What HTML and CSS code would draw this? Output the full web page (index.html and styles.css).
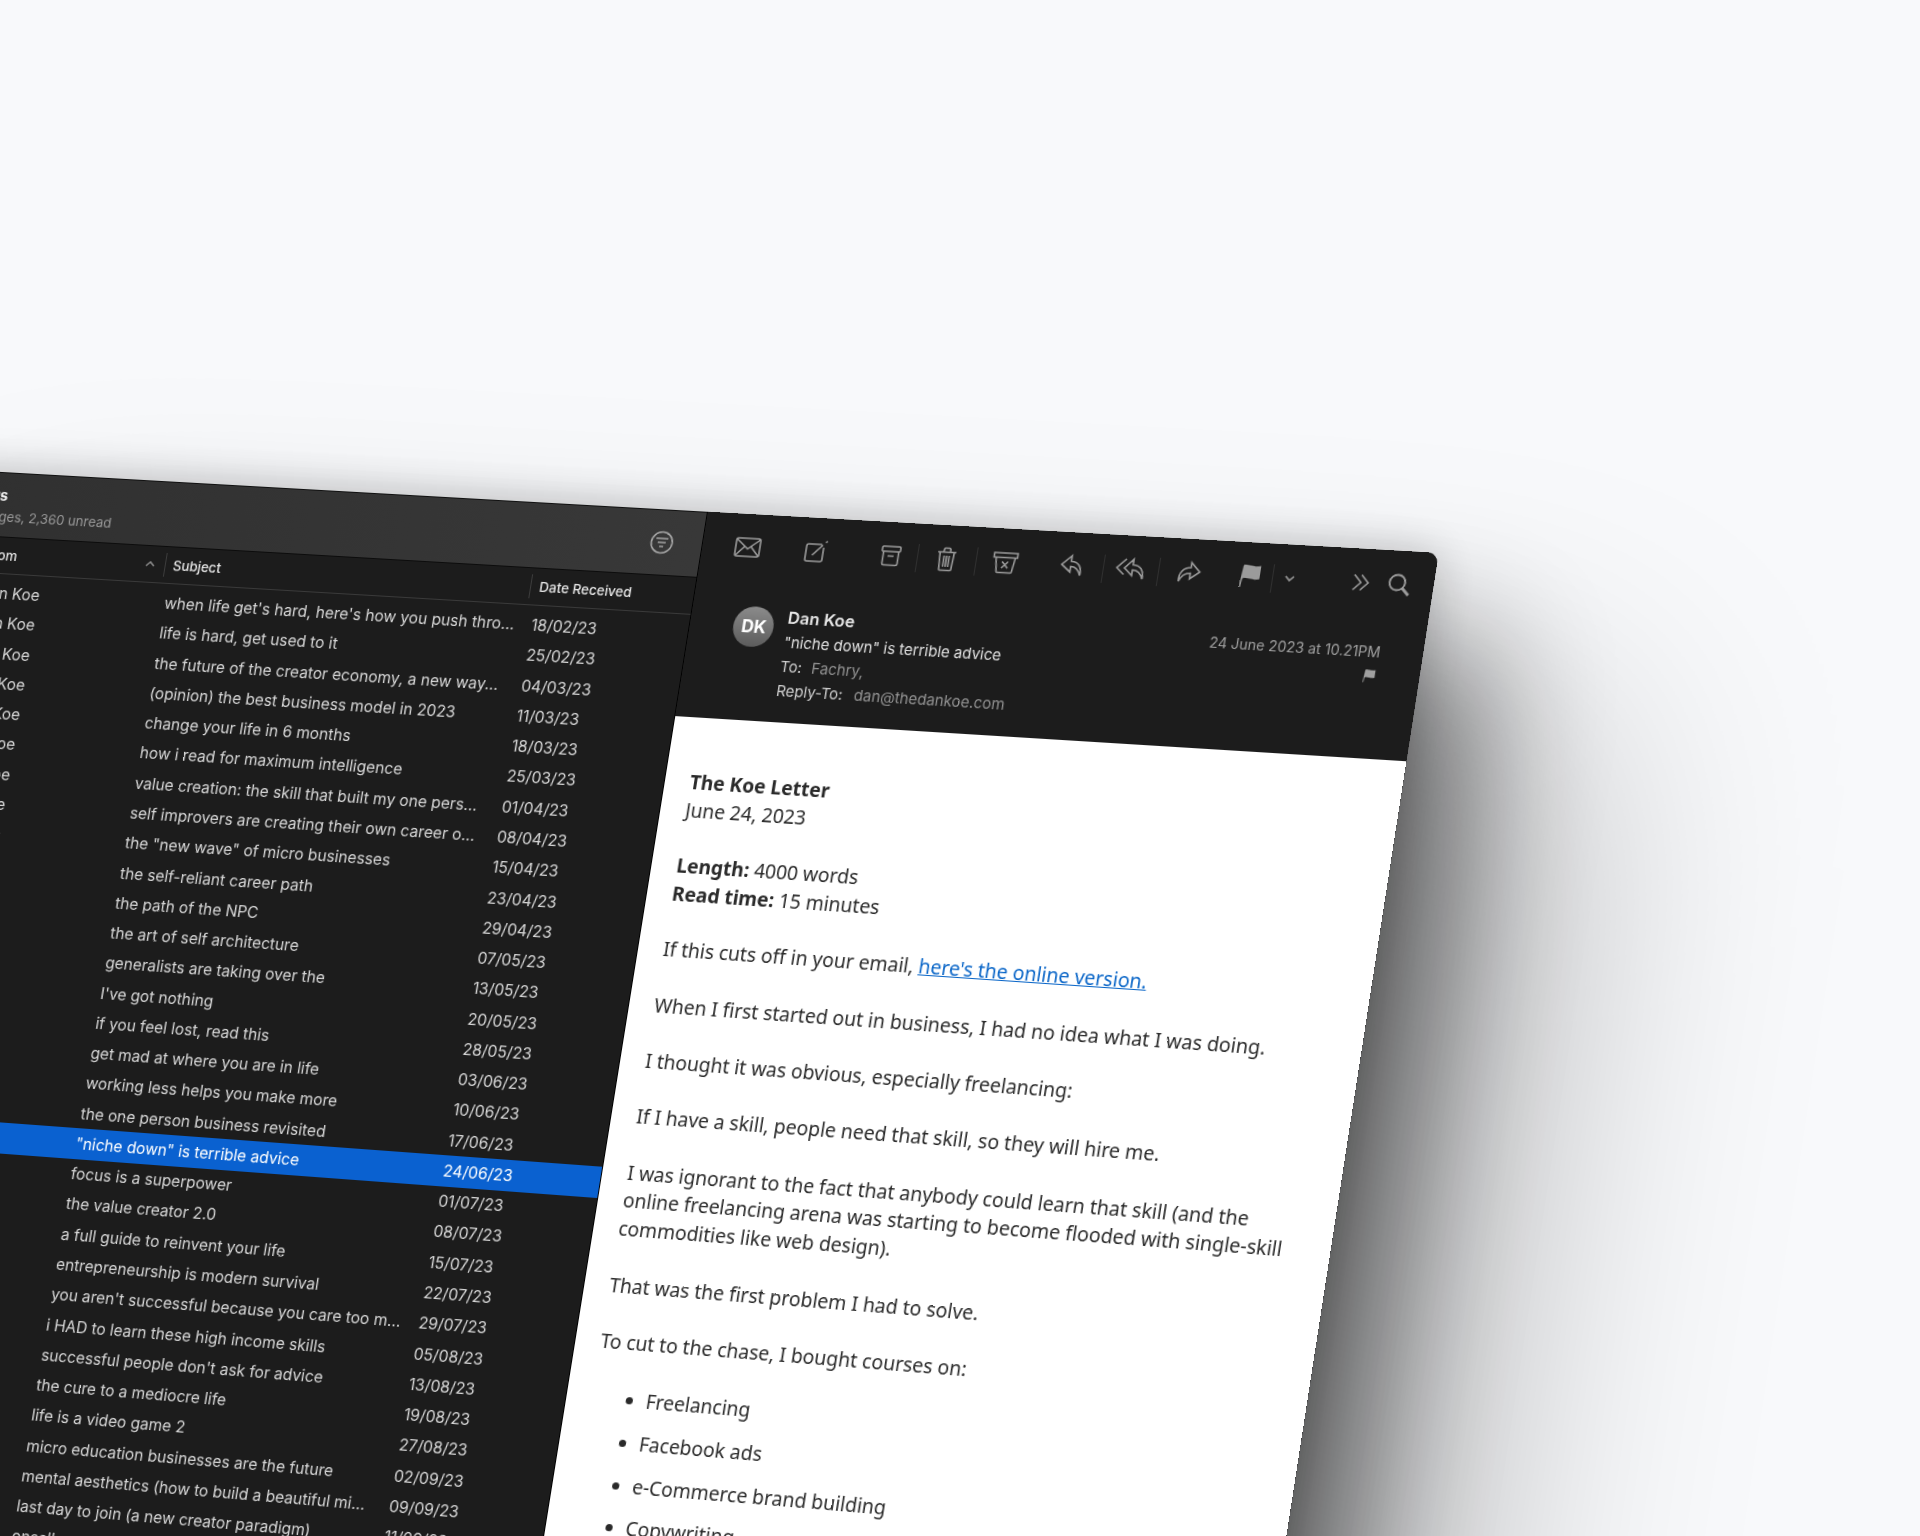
FILE: index.html
```html
<!DOCTYPE html>
<html lang="en">
<head>
    <meta charset="UTF-8">
    <title>Mail</title>
    <link rel="stylesheet" href="styles.css">
</head>
<body>
    <div class="window">
        <section class="list">
            <div class="list-top">
                <div class="list-title">
                    <h1>Newsletters</h1>
                    <p>4,582 messages, 2,360 unread</p>
                </div>
                <svg class="filter" width="24" height="24" viewBox="0 0 24 24"><circle cx="12" cy="12" r="10.500"/><path d="M6 8h12M8 12h8M10 16h4"/></svg>
            </div>
            <div class="list-cols">
                <span class="col-from">From<svg width="10" height="6" viewBox="0 0 10 6"><path d="M1 5l4-4 4 4"/></svg></span>
                <span class="col-subject">Subject</span>
                <span class="col-date">Date Received</span>
            </div>
            <ul class="rows">
                <li class="row"><span>Dan Koe</span><span>when life get's hard, here's how you push thro...</span><span>18/02/23</span></li>
                <li class="row"><span>Dan Koe</span><span>life is hard, get used to it</span><span>25/02/23</span></li>
                <li class="row"><span>Dan Koe</span><span>the future of the creator economy, a new way...</span><span>04/03/23</span></li>
                <li class="row"><span>Dan Koe</span><span>(opinion) the best business model in 2023</span><span>11/03/23</span></li>
                <li class="row"><span>Dan Koe</span><span>change your life in 6 months</span><span>18/03/23</span></li>
                <li class="row"><span>Dan Koe</span><span>how i read for maximum intelligence</span><span>25/03/23</span></li>
                <li class="row"><span>Dan Koe</span><span>value creation: the skill that built my one pers...</span><span>01/04/23</span></li>
                <li class="row"><span>Dan Koe</span><span>self improvers are creating their own career o...</span><span>08/04/23</span></li>
                <li class="row"><span>Dan Koe</span><span>the "new wave" of micro businesses</span><span>15/04/23</span></li>
                <li class="row"><span>Dan Koe</span><span>the self-reliant career path</span><span>23/04/23</span></li>
                <li class="row"><span>Dan Koe</span><span>the path of the NPC</span><span>29/04/23</span></li>
                <li class="row"><span>Dan Koe</span><span>the art of self architecture</span><span>07/05/23</span></li>
                <li class="row"><span>Dan Koe</span><span>generalists are taking over the</span><span>13/05/23</span></li>
                <li class="row"><span>Dan Koe</span><span>I've got nothing</span><span>20/05/23</span></li>
                <li class="row"><span>Dan Koe</span><span>if you feel lost, read this</span><span>28/05/23</span></li>
                <li class="row"><span>Dan Koe</span><span>get mad at where you are in life</span><span>03/06/23</span></li>
                <li class="row"><span>Dan Koe</span><span>working less helps you make more</span><span>10/06/23</span></li>
                <li class="row"><span>Dan Koe</span><span>the one person business revisited</span><span>17/06/23</span></li>
                <li class="row selected"><span>Dan Koe</span><span>"niche down" is terrible advice</span><span>24/06/23</span></li>
                <li class="row"><span>Dan Koe</span><span>focus is a superpower</span><span>01/07/23</span></li>
                <li class="row"><span>Dan Koe</span><span>the value creator 2.0</span><span>08/07/23</span></li>
                <li class="row"><span>Dan Koe</span><span>a full guide to reinvent your life</span><span>15/07/23</span></li>
                <li class="row"><span>Dan Koe</span><span>entrepreneurship is modern survival</span><span>22/07/23</span></li>
                <li class="row"><span>Dan Koe</span><span>you aren't successful because you care too m...</span><span>29/07/23</span></li>
                <li class="row"><span>Dan Koe</span><span>i HAD to learn these high income skills</span><span>05/08/23</span></li>
                <li class="row"><span>Dan Koe</span><span>successful people don't ask for advice</span><span>13/08/23</span></li>
                <li class="row"><span>Dan Koe</span><span>the cure to a mediocre life</span><span>19/08/23</span></li>
                <li class="row"><span>Dan Koe</span><span>life is a video game 2</span><span>27/08/23</span></li>
                <li class="row"><span>Dan Koe</span><span>micro education businesses are the future</span><span>02/09/23</span></li>
                <li class="row"><span>Dan Koe</span><span>mental aesthetics (how to build a beautiful mi...</span><span>09/09/23</span></li>
                <li class="row"><span>Dan Koe</span><span>last day to join (a new creator paradigm)</span><span>11/09/23</span></li>
                <li class="row"><span>Dan Koe</span><span>onsell</span><span>16/09/23</span></li>
            </ul>
        </section>

        <section class="detail">
            <div class="toolbar">
                <span class="tool tool-mail"><svg width="28" height="22" viewBox="0 0 28 22"><rect x="2" y="2" width="24" height="18" rx="2"/><path d="M2.500 3l11.500 9.500L25.500 3M2.500 19.500l8.500-9.500M25.500 19.500L17 10"/></svg></span>
                <span class="tool tool-compose"><svg width="26" height="26" viewBox="0 0 26 26"><path d="M18 6H5a2 2 0 0 0-2 2v13a2 2 0 0 0 2 2h13a2 2 0 0 0 2-2V9"/><path d="M9.500 17L19 6.500M21.500 4l1.500-1.500"/></svg></span>
                <span class="tool tool-archive"><svg width="24" height="24" viewBox="0 0 24 24"><rect x="3" y="3" width="18" height="5" rx="1"/><path d="M4.500 8v12a1.500 1.500 0 0 0 1.500 1.500h12a1.500 1.500 0 0 0 1.500-1.500V8M9 12.500h6"/></svg></span>
                <span class="tool tool-trash sep"><svg width="24" height="26" viewBox="0 0 24 26"><path d="M3 6.500h18M8.500 6.500l.5-3a1 1 0 0 1 1-1h4a1 1 0 0 1 1 1l.5 3M5 6.500l1 17a1 1 0 0 0 1 1h10a1 1 0 0 0 1-1l1-17M9.500 10v11M12 10v11M14.500 10v11"/></svg></span>
                <span class="tool sep"><svg width="28" height="24" viewBox="0 0 28 24"><path d="M2.500 3h23v4.500h-23zM4.500 7.500l2 14a1 1 0 0 0 1 1h13a1 1 0 0 0 1-1l2-14M11 11.500l6 6.500M17 11.500l-6 6.500"/></svg></span>
                <span class="tool tool-reply"><svg width="26" height="24" viewBox="0 0 26 24"><path d="M11.500 2L2.500 11l9 7v-5.500c5 0 8 3 10 8.500 1-8.500-3-13.500-10-13.500z"/></svg></span>
                <span class="tool tool-replyall sep"><svg width="36" height="24" viewBox="0 0 36 24"><path d="M18 2l-8 9 8 7v-5.500c5 0 8.500 3 10.500 8.500 1-8.500-3.500-13.500-10.500-13.500zM11 2L2.500 11l7.500 6.500"/></svg></span>
                <span class="tool tool-forward sep"><svg width="28" height="24" viewBox="0 0 28 24"><path d="M16.500 2l9 9-9 7v-5.500c-5 0-8.500 3-10.500 8.500C5 12.500 9.500 7 16.500 7z"/></svg></span>
                <span class="tool tool-flag"><svg class="solid" width="24" height="26" viewBox="0 0 24 26"><path d="M4 2.500c5-1.500 9 2 17 0v13c-7 2-11-1.500-16.500 0L3.500 24 2 24z"/></svg></span>
                <span class="tool tool-more sep"><svg width="12" height="8" viewBox="0 0 12 8"><path d="M2 2l4 4 4-4"/></svg></span>
                <span class="tool tool-over"><svg width="20" height="20" viewBox="0 0 20 20"><path d="M3 2.500l7 7.500-7 7.500M10 2.500l7 7.500-7 7.500"/></svg></span>
                <span class="tool tool-search"><svg width="24" height="24" viewBox="0 0 24 24"><circle cx="10" cy="10" r="7.500" class="mid"/><path class="thick" d="M15.500 15.500L22 22"/></svg></span>
            </div>

            <div class="msg-head">
                <div class="avatar">DK</div>
                <div class="msg-meta">
                    <div class="sender">Dan Koe</div>
                    <div class="msg-subject">"niche down" is terrible advice</div>
                    <div class="msg-line"><span class="label to-label">To:</span><span class="value">Fachry,</span></div>
                    <div class="msg-line"><span class="label reply-label">Reply-To:</span><span class="value">dan@thedankoe.com</span></div>
                </div>
                <div class="msg-side">
                    <div class="msg-date">24 June 2023 at 10.21PM</div>
                    <svg class="solid" width="14" height="15" viewBox="0 0 24 26"><path d="M4 2.500c5-1.500 9 2 17 0v13c-7 2-11-1.500-16.500 0L3.500 24 2 24z"/></svg>
                </div>
            </div>

            <article class="letter">
                <p><strong>The Koe Letter</strong><br>June 24, 2023</p>
                <p><strong>Length:</strong> 4000 words<br><strong>Read time:</strong> 15 minutes</p>
                <p>If this cuts off in your email, <a href="#">here's the online version.</a></p>
                <p>When I first started out in business, I had no idea what I was doing.</p>
                <p>I thought it was obvious, especially freelancing:</p>
                <p>If I have a skill, people need that skill, so they will hire me.</p>
                <p>I was ignorant to the fact that anybody could learn that skill (and the online freelancing arena was starting to become flooded with single-skill commodities like web design).</p>
                <p>That was the first problem I had to solve.</p>
                <p>To cut to the chase, I bought courses on:</p>
                <ul>
                    <li>Freelancing</li>
                    <li>Facebook ads</li>
                    <li>e-Commerce brand building</li>
                    <li>Copywriting</li>
                    <li>Email marketing</li>
                </ul>
            </article>
        </section>
    </div>
</body>
</html>
```

FILE: styles.css
```css
html, body {
    margin: 0;
    height: 100%;
    overflow: hidden;
    background-color: #f8f9fb;
}
/* the whole window is laid out flat, then tilted with a little perspective */
.window {
    display: flex;
    width: 1586.400px;
    height: 1500px;
    background: #1c1c1c;
    border-radius: 0 11px 0 0;
    transform-origin: 0 0;
    transform: matrix(1, 0.0564, -0.16, 1, -161, 462.8) translateX(869px) matrix3d(1,0,0,-0.000026, 0,1,0,-0.000007, 0,0,1,0, 0,0,0,1) translateX(-869px);
    box-shadow: 0 0 45px rgba(0, 0, 0, 0.2), 60px 90px 130px rgba(0, 0, 0, 0.5), 160px 160px 260px rgba(0, 0, 0, 0.28);
    font-family: Inter, "Liberation Sans", sans-serif;
    color: #dcdcdc;
}
svg {
    fill: none;
    stroke: currentColor;
    stroke-width: 1.6;
    display: block;
}
svg.solid {
    fill: currentColor;
    stroke: none;
}
.mid {
    stroke-width: 1.9;
}
.thick {
    stroke-width: 2.8;
}

/* message list */
.list {
    width: 869px;
    flex-shrink: 0;
    background: #1c1c1c;
    border-right: 1px solid #000;
    box-sizing: border-box;
}
.list-top {
    height: 66px;
    box-sizing: border-box;
    display: flex;
    align-items: center;
    justify-content: space-between;
    padding: 0 28.500px 0 72px;
    background: linear-gradient(90deg, #2f2f2f, #383838);
    border-top: 1px solid #111;
    border-bottom: 1px solid #0c0c0c;
}
.list-title h1 {
    margin: 0;
    font-size: 15px;
    font-weight: 700;
    color: #eee;
}
.list-title p {
    margin: 4px 0 0;
    font-size: 13.500px;
    color: #999;
}
.filter {
    color: #a4a4a4;
}
.list-cols {
    height: 37px;
    box-sizing: border-box;
    display: flex;
    align-items: center;
    font-size: 13.500px;
    font-weight: 500;
    color: #e4e4e4;
    border-bottom: 1px solid #3a3a3a;
}
.col-from {
    width: 331.600px;
    box-sizing: border-box;
    padding: 0 9.400px 0 147px;
    display: flex;
    align-items: center;
    justify-content: space-between;
}
.col-from svg {
    color: #888;
}
.col-subject, .col-date {
    height: 24px;
    line-height: 24px;
    padding-left: 8px;
    box-sizing: border-box;
    border-left: 1px solid #3c3c3c;
}
.col-subject {
    width: 372.700px;
}
.rows {
    list-style: none;
    margin: 0;
    padding: 4.500px 0 0;
}
.row {
    display: grid;
    grid-template-columns: 338px 373.200px 1fr;
    height: 30.270px;
    align-items: center;
    font-size: 15.700px;
    white-space: nowrap;
    color: #d6d6d6;
}
.row span:first-child {
    padding-left: 147px;
}
.row.selected {
    background: #0a61d0;
    color: #fff;
}

/* reading pane */
.detail {
    flex: 1;
    background: #1c1c1c;
    border-radius: 0 11px 0 0;
    overflow: hidden;
}
.toolbar {
    height: 66px;
    box-sizing: border-box;
    display: flex;
    padding-left: 15px;
    color: #9b9b9b;
}
.tool {
    width: 58px;
    height: 100%;
    display: flex;
    align-items: center;
    justify-content: center;
    flex-shrink: 0;
    position: relative;
}
.sep::before {
    content: "";
    position: absolute;
    left: 0;
    top: 20px;
    height: 28px;
    border-left: 1px solid #303030;
}
.tool-mail { width: 59px; }
.tool-compose { margin-left: 9.600px; }
.tool-archive { margin-left: 16px; }
.tool-trash { margin-left: -2.400px; }
.tool-reply { margin-left: 7.500px; }
.tool-replyall { margin-left: 1.400px; }
.tool-forward { margin-left: -4.400px; }
.tool-flag { width: 42px; margin-left: 10.800px; }
.tool-more { width: 34px; }
.tool-over { width: 30px; margin-left: 37.300px; }
.tool-search { width: 30px; margin-left: 7.600px; }

.msg-head {
    height: 138px;
    box-sizing: border-box;
    display: flex;
    padding: 22px 41.400px 0 43.400px;
    font-size: 14.800px;
}
.avatar {
    width: 40px;
    height: 40px;
    margin-top: 3px;
    border-radius: 50%;
    background: linear-gradient(#8b8b8b, #5c5c5c);
    color: #fff;
    font-size: 17px;
    font-weight: 700;
    line-height: 40px;
    text-align: center;
}
.msg-meta {
    margin-left: 12.400px;
    flex: 1;
}
.sender {
    font-size: 16.500px;
    font-weight: 600;
    height: 25px;
    line-height: 25px;
    color: #e6e6e6;
}
.msg-subject {
    height: 24px;
    line-height: 24px;
    color: #e0e0e0;
}
.msg-line {
    height: 24px;
    line-height: 24px;
    display: flex;
}
.label {
    color: #cfcfcf;
}
.to-label { width: 31px; }
.reply-label { width: 77px; }
.value {
    color: #929292;
}
.msg-side {
    display: flex;
    flex-direction: column;
    align-items: flex-end;
    padding-top: 4px;
    color: #a0a0a0;
    font-size: 13.900px;
}
.msg-side svg {
    margin: 8px 0 0;
}
.msg-date {
    white-space: nowrap;
}

/* letter */
.letter {
    background: #fff;
    height: 1300px;
    box-sizing: border-box;
    padding: 51px 40px 0 25px;
    font-family: "Noto Sans", sans-serif;
    font-size: 19px;
    line-height: 27.700px;
    color: #2a2a2a;
}
.letter p {
    margin: 0 0 27.700px;
}
.letter a {
    color: #0a66c8;
}
.letter ul {
    margin: 28.500px 0 0;
    padding-left: 54px;
}
.letter li {
    margin-bottom: 14px;
}
```
